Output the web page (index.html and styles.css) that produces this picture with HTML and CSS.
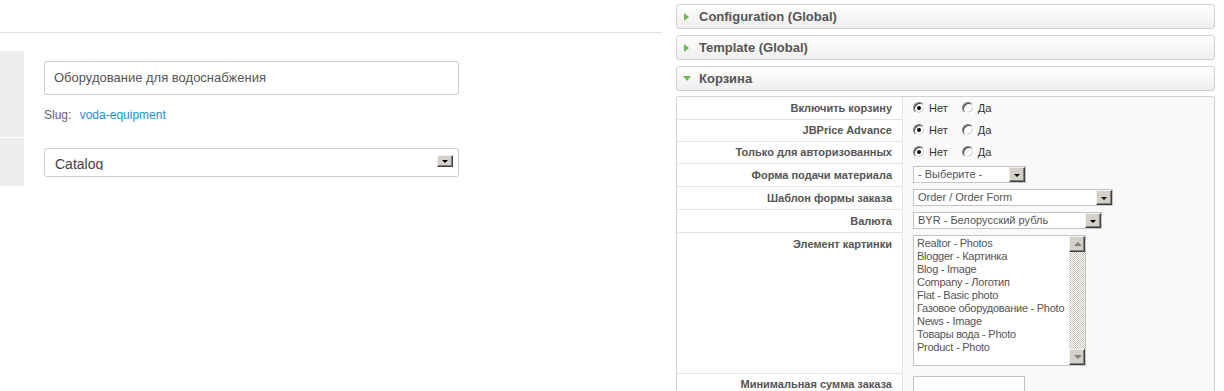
FILE: index.html
```html
<!DOCTYPE html>
<html lang="ru">
<head>
    <meta charset="UTF-8">
    <title>Категория</title>
    <link rel="stylesheet" href="styles.css">
</head>
<body>
<div class="page">
    <div class="main">
        <div class="main-top"></div>
        <div class="row row-name">
            <div class="row-side"></div>
            <div class="row-body">
                <div class="text-input">Оборудование для водоснабжения</div>
                <div class="slug">Slug: <a href="#">voda-equipment</a></div>
            </div>
        </div>
        <div class="row row-parent">
            <div class="row-side"></div>
            <div class="row-body">
                <div class="big-select">
                    <div class="big-select-text">Catalog</div>
                    <span class="dd-btn dd-big"><i></i></span>
                </div>
            </div>
        </div>
    </div>

    <div class="params">
        <div class="pane-head closed"><i class="tri"></i>Configuration (Global)</div>
        <div class="pane-head closed"><i class="tri"></i>Template (Global)</div>
        <div class="pane-head open"><i class="tri"></i>Корзина</div>
        <div class="pane-body">
            <table class="paramlist">
                <tr>
                    <td class="key">Включить корзину</td>
                    <td class="val"><span class="radio on"></span>Нет <span class="radio second"></span>Да</td>
                </tr>
                <tr>
                    <td class="key">JBPrice Advance</td>
                    <td class="val"><span class="radio on"></span>Нет <span class="radio second"></span>Да</td>
                </tr>
                <tr>
                    <td class="key">Только для авторизованных</td>
                    <td class="val"><span class="radio on"></span>Нет <span class="radio second"></span>Да</td>
                </tr>
                <tr class="sel-row">
                    <td class="key">Форма подачи материала</td>
                    <td class="val"><div class="small-select w112">- Выберите -<span class="dd-btn"><i></i></span></div></td>
                </tr>
                <tr class="sel-row">
                    <td class="key">Шаблон формы заказа</td>
                    <td class="val"><div class="small-select w199">Order / Order Form<span class="dd-btn"><i></i></span></div></td>
                </tr>
                <tr class="sel-row">
                    <td class="key">Валюта</td>
                    <td class="val"><div class="small-select w188">BYR - Белорусский рубль<span class="dd-btn"><i></i></span></div></td>
                </tr>
                <tr class="list-row">
                    <td class="key">Элемент картинки</td>
                    <td class="val">
                        <div class="listbox">
                            <ul>
                                <li>Realtor - Photos</li>
                                <li>Blogger - Картинка</li>
                                <li>Blog - Image</li>
                                <li>Company - Логотип</li>
                                <li>Flat - Basic photo</li>
                                <li>Газовое оборудование - Photo</li>
                                <li>News - Image</li>
                                <li>Товары вода - Photo</li>
                                <li>Product - Photo</li>
                            </ul>
                            <div class="scroll">
                                <span class="sb-btn up"><i></i></span>
                                <span class="sb-track"></span>
                                <span class="sb-btn down"><i></i></span>
                            </div>
                        </div>
                    </td>
                </tr>
                <tr>
                    <td class="key">Минимальная сумма заказа</td>
                    <td class="val"><div class="small-input"></div></td>
                </tr>
            </table>
        </div>
    </div>
</div>
</body>
</html>
```

FILE: styles.css
```css
body {
    margin: 0;
    background: #fff;
    font-family: "Liberation Sans", Arial, sans-serif;
    color: #555;
    overflow: hidden;
}
.page {
    display: flex;
    align-items: flex-start;
    height: 391px;
}

/* left: item fields */
.main {
    width: 662px;
    flex: none;
}
.main-top {
    height: 32px;
    border-bottom: 1px solid #e3e3e3;
    margin-bottom: 18px;
}
.row {
    display: flex;
}
.row-side {
    width: 24px;
    background: #eeeeee;
    flex: none;
}
.row-name {
    height: 86px;
    border-bottom: 1px solid #fff;
}
.row-parent {
    height: 48px;
}
.row-body {
    padding: 10px 0 0 20px;
}
.text-input {
    width: 404px;
    height: 32px;
    border: 1px solid #cccccc;
    border-radius: 3px;
    padding-left: 9px;
    font-size: 13px;
    line-height: 32px;
    color: #555;
}
.slug {
    margin-top: 13px;
    font-size: 12px;
    color: #666;
    word-spacing: 5px;
}
.slug a {
    color: #2a8bd6;
    text-decoration: none;
    word-spacing: 0;
}
.big-select {
    position: relative;
    width: 413px;
    height: 27px;
    border: 1px solid #cccccc;
    border-radius: 3px;
}
.big-select-text {
    margin: 7px 0 0 10px;
    height: 14px;
    overflow: hidden;
    font-size: 14px;
    line-height: 16px;
    color: #444;
}
.big-select .dd-big {
    top: 6px;
    right: 5px;
    width: 14px;
    height: 10px;
}

/* classic win dropdown button */
.dd-btn {
    position: absolute;
    top: 0;
    right: 0;
    width: 14px;
    height: 13px;
    background: #d4d0c8;
    border: 1px solid;
    border-color: #f4f2ee #404040 #404040 #f4f2ee;
    box-shadow: inset -1px -1px 0 #808080;
}
.dd-btn i {
    position: absolute;
    left: 4px;
    top: 50%;
    margin-top: -1px;
    border-left: 3px solid transparent;
    border-right: 3px solid transparent;
    border-top: 3px solid #000;
}

/* right: params */
.params {
    width: 539px;
    margin: 4px 0 0 14px;
    flex: none;
}
.pane-head {
    height: 23px;
    border: 1px solid #d2d2d2;
    border-radius: 3px;
    background: linear-gradient(#ffffff, #eeeeee);
    margin-bottom: 6px;
    font-size: 13px;
    font-weight: bold;
    line-height: 23px;
    color: #555;
    display: flex;
    align-items: center;
    padding-left: 6px;
}
.pane-head .tri {
    width: 0;
    height: 0;
    margin-right: 10px;
}
.pane-head.closed .tri {
    border-top: 4px solid transparent;
    border-bottom: 4px solid transparent;
    border-left: 5px solid #72b757;
    margin-left: 1px;
}
.pane-head.open .tri {
    border-left: 4px solid transparent;
    border-right: 4px solid transparent;
    border-top: 5px solid #72b757;
    margin-right: 8px;
}
.pane-body {
    border: 1px solid #d2d2d2;
    border-bottom: none;
    border-radius: 3px 3px 0 0;
    background: #f9f9f9;
    height: 300px;
    margin-top: -1px;
}
.paramlist {
    border-collapse: collapse;
    font-size: 11px;
}
.paramlist td {
    padding: 0;
    vertical-align: middle;
}
.paramlist tr {
    height: 22px;
}
.paramlist tr.sel-row {
    height: 23px;
}
.paramlist .key {
    width: 215px;
    padding-right: 10px;
    text-align: right;
    font-weight: bold;
    color: #555;
    background: #fff;
    border-right: 1px solid #e3e3e3;
    border-bottom: 1px solid #e3e3e3;
}
.paramlist .val {
    padding-left: 10px;
    color: #333;
    white-space: nowrap;
}
.paramlist tr.list-row {
    height: 141px;
}
.paramlist .list-row td {
    vertical-align: top;
}
.paramlist .list-row .key {
    padding-top: 5px;
}
.paramlist .list-row .val {
    padding-top: 3px;
}

.radio {
    display: inline-block;
    position: relative;
    width: 10px;
    height: 10px;
    border-radius: 50%;
    border: 1px solid;
    border-color: #808080 #ffffff #ffffff #808080;
    box-shadow: inset 1px 1px 0 #404040, inset -1px -1px 0 #d4d0c8;
    background: #fff;
    vertical-align: -2px;
    margin-right: 4px;
}
.radio.second {
    margin-left: 11px;
}
.radio.on::after {
    content: "";
    position: absolute;
    left: 3px;
    top: 3px;
    width: 4px;
    height: 4px;
    border-radius: 50%;
    background: #000;
}

.small-select {
    position: relative;
    height: 15px;
    border: 1px solid #c4c4c4;
    background: #fff;
    padding-left: 4px;
    line-height: 15px;
    color: #555;
    box-sizing: content-box;
}
.small-select .dd-btn {
    top: 0;
    right: 0;
}
.w112 { width: 107px; }
.w199 { width: 194px; }
.w188 { width: 183px; }

.listbox {
    position: relative;
    width: 171px;
    height: 129px;
    border: 1px solid #c4c4c4;
    background: #fff;
}
.listbox ul {
    list-style: none;
    margin: 0;
    padding: 1px 0 0 3px;
    line-height: 13px;
    letter-spacing: -0.25px;
    color: #555;
}
.scroll {
    position: absolute;
    top: 0;
    right: 0;
    width: 16px;
    height: 129px;
    display: flex;
    flex-direction: column;
}
.sb-track {
    flex: 1;
    background: repeating-conic-gradient(#c8c4bc 0 25%, #ffffff 0 50%) 0 0 / 2px 2px;
}
.sb-btn {
    position: relative;
    height: 14px;
    background: #d4d0c8;
    border: 1px solid;
    border-color: #f4f2ee #404040 #404040 #f4f2ee;
    box-shadow: inset -1px -1px 0 #808080;
    flex: none;
}
.sb-btn i {
    position: absolute;
    left: 4px;
    top: 5px;
    border-left: 4px solid transparent;
    border-right: 4px solid transparent;
}
.sb-btn.up i {
    border-bottom: 4px solid #808080;
}
.sb-btn.down i {
    border-top: 4px solid #808080;
}

.small-input {
    width: 110px;
    height: 15px;
    border: 1px solid #c4c4c4;
    background: #fff;
}
```
